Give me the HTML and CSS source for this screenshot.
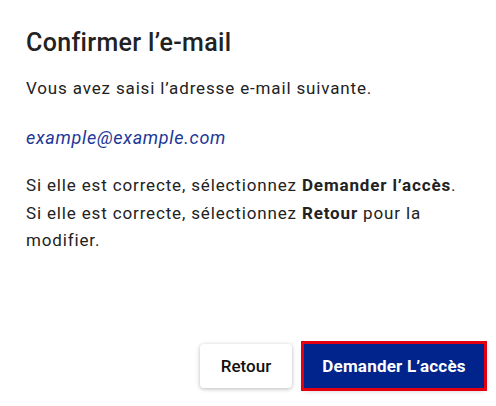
FILE: index.html
```html
<!DOCTYPE html>
<html lang="fr">
<head>
<meta charset="utf-8">
<link rel="stylesheet" href="styles.css">
</head>
<body>
<div class="dialog">
  <div class="content">
    <h2 class="title">Confirmer l’e-mail</h2>
    <p class="text">Vous avez saisi l’adresse e-mail suivante.</p>
    <p class="email">example@example.com</p>
    <p class="para">Si elle est correcte, sélectionnez <strong>Demander l’accès</strong>.<br>Si elle est correcte, sélectionnez <strong>Retour</strong> pour la<br>modifier.</p>
  </div>
  <div class="actions">
    <button class="btn btn-secondary">Retour</button>
    <button class="btn btn-primary">Demander L’accès</button>
  </div>
</div>
</body>
</html>
```

FILE: styles.css
```css
html, body {
  margin: 0;
  padding: 0;
  background: #ffffff;
}
body {
  font-family: Roboto, "Liberation Sans", Arial, sans-serif;
  color: #222222;
  width: 496px;
  height: 406px;
  overflow: hidden;
}
.dialog {
  box-sizing: border-box;
  width: 496px;
  height: 406px;
  display: flex;
  flex-direction: column;
  justify-content: space-between;
  padding: 28px 12px 18px 26px;
}
.content {
  display: flex;
  flex-direction: column;
}
.title {
  margin: 0;
  font-size: 25px;
  font-weight: 500;
  line-height: 30px;
  letter-spacing: 0.33px;
  color: #222222;
}
.text {
  margin: 18px 0 0;
  font-size: 17px;
  line-height: 24px;
  letter-spacing: 0.85px;
}
.email {
  margin: 26px 0 0;
  font-size: 18px;
  line-height: 24px;
  letter-spacing: 0.7px;
  font-style: italic;
  color: #1b3797;
}
.para {
  margin: 22px 0 0;
  font-size: 17px;
  line-height: 27.5px;
  letter-spacing: 0.85px;
}
.para strong {
  font-weight: 700;
}
.actions {
  display: flex;
  justify-content: flex-end;
  gap: 12px;
}
.btn {
  height: 44px;
  border: none;
  border-radius: 4px;
  font-family: Roboto, "Liberation Sans", Arial, sans-serif;
  font-size: 17px;
  font-weight: 500;
  cursor: pointer;
}
.btn-secondary {
  width: 92px;
  background: #ffffff;
  color: #111111;
  box-shadow: 0 1px 4px rgba(0, 0, 0, 0.28);
}
.btn-primary {
  width: 180px;
  background: #00238c;
  color: #ffffff;
  font-weight: 700;
  letter-spacing: 0.2px;
  border-radius: 0;
  outline: 3px solid #e5000f;
  box-shadow: 0 2px 6px rgba(0, 0, 0, 0.25);
}
```
